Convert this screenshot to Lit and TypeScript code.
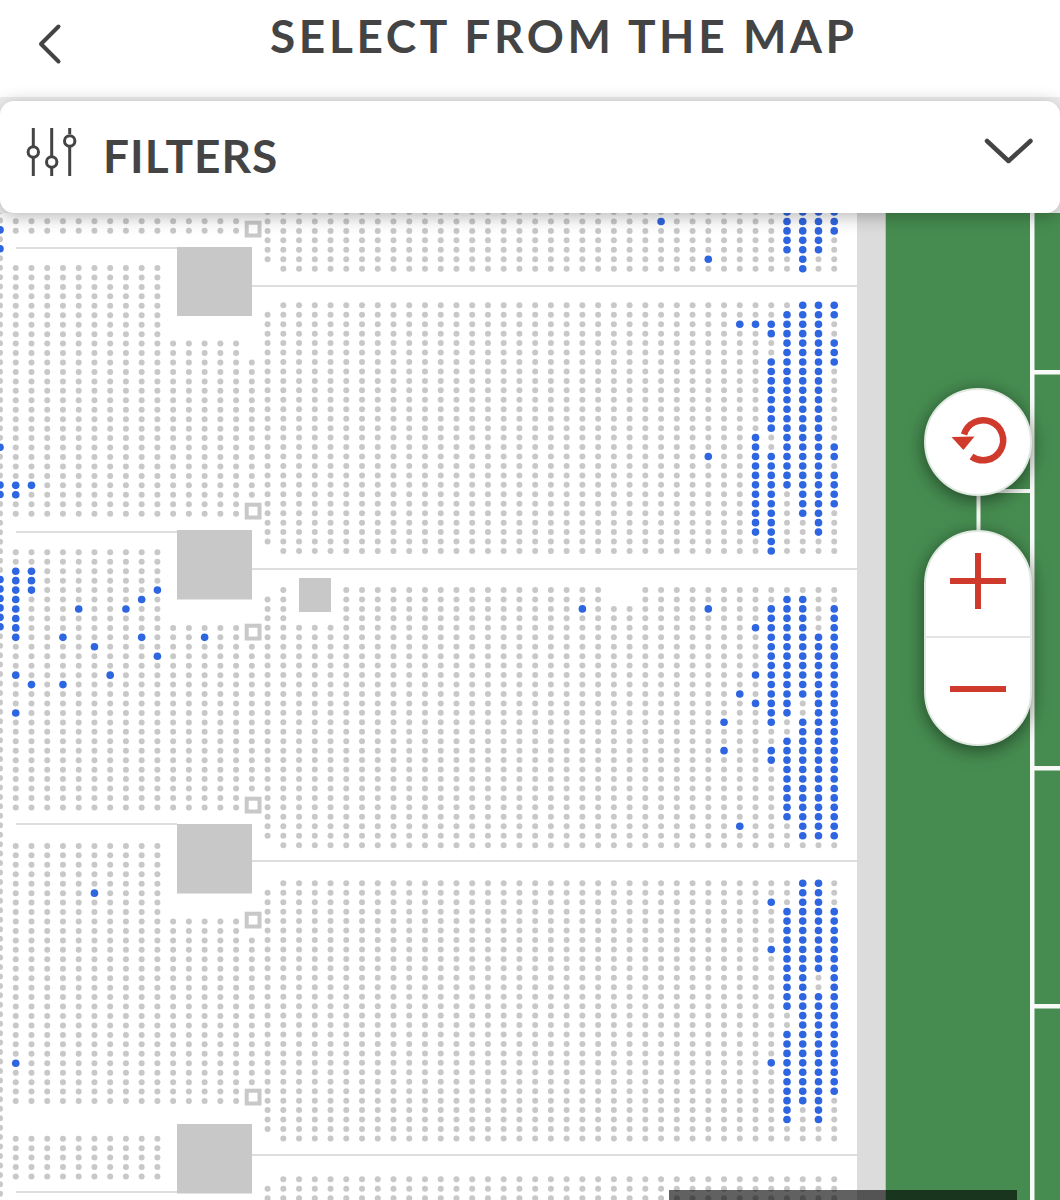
import { LitElement, html, css, svg } from "lit";
import { customElement } from "lit/decorators.js";

const COL = 15.74;
const ROW = 9.45;

// cols: [first col, last col, first row, last row]
interface Block {
  y: number;
  cols: [number, number, number, number][];
  blue?: Record<number, string>;
}

const BLOCKS: Block[] = [
  // far left aisle column runs the whole height
  { y: 211, cols: [[0, 0, 0, 105]], blue: { 0: "2,4,25,29,30,39-44" } },
  // left stand
  { y: 221.3, cols: [[1, 15, 0, 1]] },
  {
    y: 268,
    cols: [[1, 10, 0, 26], [11, 15, 8, 26], [16, 16, 10, 24]],
    blue: { 1: "23,24", 2: "23" },
  },
  {
    y: 552.3,
    cols: [[1, 10, 0, 27], [11, 15, 8, 27], [16, 16, 10, 25]],
    blue: {
      1: "2-9,13,17",
      2: "2-4,14",
      4: "9,14",
      5: "6",
      6: "10",
      7: "13",
      8: "6",
      9: "5,9",
      10: "4,11",
      13: "9",
    },
  },
  {
    y: 845.9,
    cols: [[1, 10, 0, 27], [11, 15, 8, 27], [16, 16, 10, 25]],
    blue: { 1: "23", 6: "5" },
  },
  { y: 1138.7, cols: [[1, 10, 0, 4]] },
  // right stand
  {
    y: 212,
    cols: [[18, 53, 0, 6], [17, 17, 0, 5]],
    blue: { 42: "1", 45: "5", 50: "0-4", 51: "0-6", 52: "0-4", 53: "0-2" },
  },
  {
    y: 305.3,
    cols: [[18, 53, 0, 26], [17, 17, 1, 25]],
    blue: {
      45: "16",
      47: "2",
      48: "2,14-24",
      49: "2,3,6-13,16-26",
      50: "1-19",
      51: "0-22",
      52: "0-24",
      53: "0,1,4-6,15,16,18-21",
    },
  },
  {
    y: 590,
    cols: [
      [17, 17, 1, 26],
      [18, 18, 0, 27],
      [19, 21, 4, 27],
      [22, 38, 0, 27],
      [39, 40, 2, 27],
      [41, 53, 0, 27],
    ],
    blue: {
      37: "2",
      45: "2",
      46: "14,17",
      47: "11,25",
      48: "4,9,12",
      49: "2-14,17,18",
      50: "1-13,16-24",
      51: "1-11,14-26",
      52: "5-26",
      53: "2-26",
    },
  },
  {
    y: 883.3,
    cols: [[18, 53, 0, 27], [17, 17, 1, 26]],
    blue: {
      49: "2,7,19",
      50: "3-13,16-25",
      51: "0-23",
      52: "0-9,12-25",
      53: "3-22",
    },
  },
  { y: 1179.3, cols: [[18, 53, 0, 2], [17, 17, 1, 2]] },
];

const BIG_SQUARES = [
  [177, 247, 75, 69],
  [177, 530, 75, 69.5],
  [177, 824, 75, 69.5],
  [177, 1124, 75, 69.5],
  [299, 578, 32, 34],
];
const GATE_YS = [221, 503, 624, 797, 912, 1089];
const LEFT_LINES = [248, 532, 824, 1192];
const RIGHT_LINES = [286, 569, 861, 1155];
const PITCH_LINES = [372, 768, 1006];

function parseRows(spec = ""): Set<number> {
  const rows = new Set<number>();
  for (const part of spec.split(",")) {
    if (!part) continue;
    const [a, b] = part.split("-").map(Number);
    for (let i = a; i <= (b ?? a); i++) rows.add(i);
  }
  return rows;
}

function seats() {
  const out = [];
  for (const block of BLOCKS) {
    for (const [from, to, first, last] of block.cols) {
      for (let k = from; k <= to; k++) {
        const on = parseRows(block.blue?.[k]);
        for (let i = first; i <= last; i++) {
          const sold = on.has(i);
          out.push(
            svg`<circle class=${sold ? "seat on" : "seat"} cx=${k * COL} cy=${block.y + i * ROW} r=${sold ? 3.8 : 3}></circle>`
          );
        }
      }
    }
  }
  return out;
}

@customElement("app-root")
export class AppRoot extends LitElement {
  static styles = css`
    :host {
      display: block;
      width: 1060px;
      height: 1200px;
      overflow: hidden;
      background: #fff;
      font-family: Lato, "Liberation Sans", sans-serif;
      color: #444;
    }
    .header {
      display: flex;
      height: 97px;
      padding-left: 38px;
      border-bottom: 4px solid #efefef;
      box-sizing: content-box;
    }
    .back {
      width: 24px;
      height: 97px;
      flex: none;
    }
    .title {
      margin: 8px 0 0 208px;
      font-size: 46px;
      line-height: 56px;
      font-weight: 700;
      letter-spacing: 3.6px;
      white-space: nowrap;
    }
    .card-wrap {
      position: relative;
      z-index: 2;
      background: #f1f1f1;
    }
    .filters {
      display: flex;
      align-items: center;
      height: 112px;
      padding: 0 24px 0 24px;
      background: #fff;
      border-radius: 14px;
      box-shadow: 0 3px 18px rgba(0, 0, 0, 0.3);
    }
    .sliders {
      width: 54px;
      height: 54px;
      margin-bottom: 6px;
      flex: none;
    }
    .filters-label {
      margin: 0 0 4px 25px;
      font-size: 46px;
      font-weight: 700;
      letter-spacing: 1px;
      flex: 1;
    }
    .chevron {
      width: 52px;
      height: 30px;
      margin-bottom: 10px;
      flex: none;
    }
    .map {
      position: relative;
      height: 987px;
    }
    .map svg {
      display: block;
    }
    .seat {
      fill: #c8c8c8;
    }
    .seat.on {
      fill: #2e65e0;
    }
    .block {
      fill: #c8c8c8;
    }
    .gate {
      fill: none;
      stroke: #c8c8c8;
      stroke-width: 4;
    }
    .rule {
      stroke: #dedede;
      stroke-width: 2;
    }
    .aisle {
      fill: #dcdcdc;
    }
    .pitch {
      fill: #468c50;
    }
    .pitch-edge {
      stroke: #a9cbae;
      stroke-width: 1;
    }
    .pitch-line {
      fill: #f7faf7;
    }
    .controls {
      position: absolute;
      left: 924px;
      top: 175px;
      display: flex;
      flex-direction: column;
      gap: 34px;
      width: 108px;
    }
    .round,
    .zoom {
      box-sizing: border-box;
      background: #fff;
      border: 2px solid #dfe9e0;
      box-shadow: 0 4px 18px rgba(0, 0, 0, 0.5);
    }
    .round {
      display: flex;
      align-items: center;
      justify-content: center;
      height: 108px;
      border-radius: 54px;
    }
    .round svg {
      margin: 0 0 6px 1px;
    }
    .zoom {
      display: flex;
      flex-direction: column;
      height: 216px;
      border-radius: 54px;
    }
    .zoom div {
      display: flex;
      align-items: center;
      justify-content: center;
      box-sizing: border-box;
    }
    .plus {
      height: 106px;
      padding-bottom: 7px;
      border-bottom: 2px solid #e4e4e4;
    }
    .minus {
      flex: 1;
      padding-bottom: 4px;
    }
    .red {
      fill: #cf3a2c;
    }
    .scrollbar {
      position: absolute;
      left: 669px;
      bottom: 0;
      width: 348px;
      height: 10px;
      background: rgba(0, 0, 0, 0.62);
    }
  `;

  render() {
    return html`
      <div class="header">
        <svg class="back" viewBox="0 0 24 97" fill="none" stroke="#444" stroke-width="4" stroke-linecap="round" stroke-linejoin="round">
          <path d="M20.5 26.5 3 44l17.5 17.5"></path>
        </svg>
        <div class="title">SELECT FROM THE MAP</div>
      </div>
      <div class="card-wrap">
        <div class="filters">
          <svg class="sliders" viewBox="0 0 54 54" fill="none" stroke="#444" stroke-width="3">
            <path d="M9.3 1v18M9.3 31v18M27.700 1v28M27.700 41v8M45.700 1v6M45.700 20v29"></path>
            <circle cx="9.300" cy="25" r="5.200"></circle>
            <circle cx="27.700" cy="35" r="5.200"></circle>
            <circle cx="45.700" cy="14" r="5.200"></circle>
          </svg>
          <div class="filters-label">FILTERS</div>
          <svg class="chevron" viewBox="0 0 52 30" fill="none" stroke="#444" stroke-width="4.500" stroke-linecap="round" stroke-linejoin="round">
            <path d="M3 4 24.500 24 46.500 4"></path>
          </svg>
        </div>
      </div>
      <div class="map">
        <svg width="1060" height="987" viewBox="0 213 1060 987">
          <rect class="aisle" x="857" y="213" width="29" height="987"></rect>
          <rect class="pitch" x="885.500" y="213" width="175" height="987"></rect>
          <path class="pitch-edge" d="M885.500 213v987"></path>
          <rect class="pitch-line" x="1030" y="213" width="4.500" height="987"></rect>
          ${PITCH_LINES.map(
            (y) => svg`<rect class="pitch-line" x="1034" y=${y - 2} width="26" height="4.500"></rect>`
          )}
          <rect class="pitch-line" x="975" y="489" width="56" height="4"></rect>
          <rect class="pitch-line" x="976.500" y="490" width="4" height="50"></rect>
          ${LEFT_LINES.map((y) => svg`<line class="rule" x1="16" x2="177" y1=${y} y2=${y}></line>`)}
          ${RIGHT_LINES.map((y) => svg`<line class="rule" x1="252" x2="857" y1=${y} y2=${y}></line>`)}
          ${seats()}
          ${BIG_SQUARES.map(
            ([x, y, w, h]) => svg`<rect class="block" x=${x} y=${y} width=${w} height=${h}></rect>`
          )}
          ${GATE_YS.map(
            (y) => svg`<rect class="gate" x="246.700" y=${y + 1.7} width="12.800" height="12.800"></rect>`
          )}
        </svg>
        <div class="controls">
          <div class="round">
            <svg width="60" height="60" viewBox="0 0 60 60">
              <path d="M22.500 47.500A20 20 0 1 0 15 25.500" fill="none" stroke="#cf3a2c" stroke-width="6.500"></path>
              <path class="red" d="M2.500 28 25.500 27.500 14.400 41z"></path>
            </svg>
          </div>
          <div class="zoom">
            <div class="plus">
              <svg width="56" height="56" viewBox="0 0 56 56">
                <path class="red" d="M25 0h6v25h25v6H31v25h-6V31H0v-6h25z"></path>
              </svg>
            </div>
            <div class="minus">
              <svg width="56" height="6" viewBox="0 0 56 6">
                <rect class="red" width="56" height="6"></rect>
              </svg>
            </div>
          </div>
        </div>
        <div class="scrollbar"></div>
      </div>
    `;
  }
}
